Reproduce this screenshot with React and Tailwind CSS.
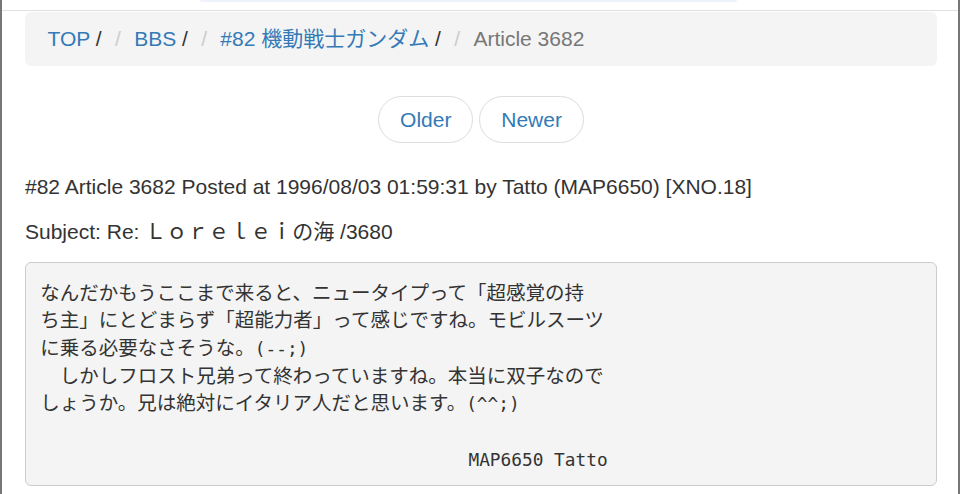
const A = ({ children }) => (
  <span className="text-[17.8px]">{children}</span>
);

export default function App() {
  const lines = [
    "なんだかもうここまで来ると、ニュータイプって「超感覚の持",
    "ち主」にとどまらず「超能力者」って感じですね。モビルスーツ",
    <>
      に乗る必要なさそうな。<A>(--;)</A>
    </>,
    "　しかしフロスト兄弟って終わっていますね。本当に双子なので",
    <>
      しょうか。兄は絶対にイタリア人だと思います。<A>(^^;)</A>
    </>,
    "",
    <A>{" ".repeat(40) + "MAP6650 Tatto"}</A>,
  ];
  const sep = <span className="px-[7.5px] text-[#ccc]">/{"\u00a0"}</span>;
  return (
    <div
      className="w-[960px] h-[494px] overflow-hidden bg-white border-x-2 border-[#777] text-[#333] text-[21px] leading-[30px]"
      style={{ fontFamily: '"Liberation Sans", Arial, "Noto Sans CJK JP", sans-serif' }}
    >
      <div className="h-[11px] border-b border-[#e0e0e0]">
        <div className="ml-[198px] w-[537px] h-[2px] bg-[#eef2fb] rounded-b-[2px]" />
      </div>
      <div className="pl-[23px] pr-[21px]">
        <ol className="mt-[1px] mb-[30px] bg-[#f4f4f4] rounded-[6px] pl-[22.5px] pr-[20px] py-[12px] whitespace-nowrap">
          <li className="inline-block">
            <a className="text-[#337ab7]">TOP</a> /
          </li>{" "}
          <li className="inline-block">
            {sep}
            <a className="text-[#337ab7]">BBS</a> /
          </li>{" "}
          <li className="inline-block">
            {sep}
            <a className="text-[#337ab7]">#82 機動戦士ガンダム</a> /
          </li>{" "}
          <li className="inline-block text-[#777]">
            {sep}
            Article 3682
          </li>
        </ol>
        <ul className="mb-[29px] text-center">
          <li className="inline-block">
            <a className="inline-block px-[21px] py-[7.5px] border border-[#ddd] rounded-full bg-white text-[#337ab7]">
              Older
            </a>
          </li>{" "}
          <li className="inline-block">
            <a className="inline-block px-[21px] py-[7.5px] border border-[#ddd] rounded-full bg-white text-[#337ab7]">
              Newer
            </a>
          </li>
        </ul>
        <p className="mb-[15px]">
          #82 Article 3682 Posted at 1996/08/03 01:59:31 by Tatto (MAP6650) [XNO.18]
        </p>
        <p className="mb-[15px]">Subject: Re: Ｌｏｒｅｌｅｉの海 /3680</p>
        <div
          className="bg-[#f4f4f4] border border-[#ccc] rounded-[6px] px-[14.25px] pt-[16.5px] pb-[11.5px] text-[19.5px] leading-[27.7px] text-[#333] whitespace-pre"
          style={{ fontFamily: '"DejaVu Sans Mono", "Noto Sans CJK JP", monospace' }}
        >
          {lines.map((l, i) => (
            <div key={i} className="h-[27.7px]">
              {l}
            </div>
          ))}
        </div>
      </div>
    </div>
  );
}
